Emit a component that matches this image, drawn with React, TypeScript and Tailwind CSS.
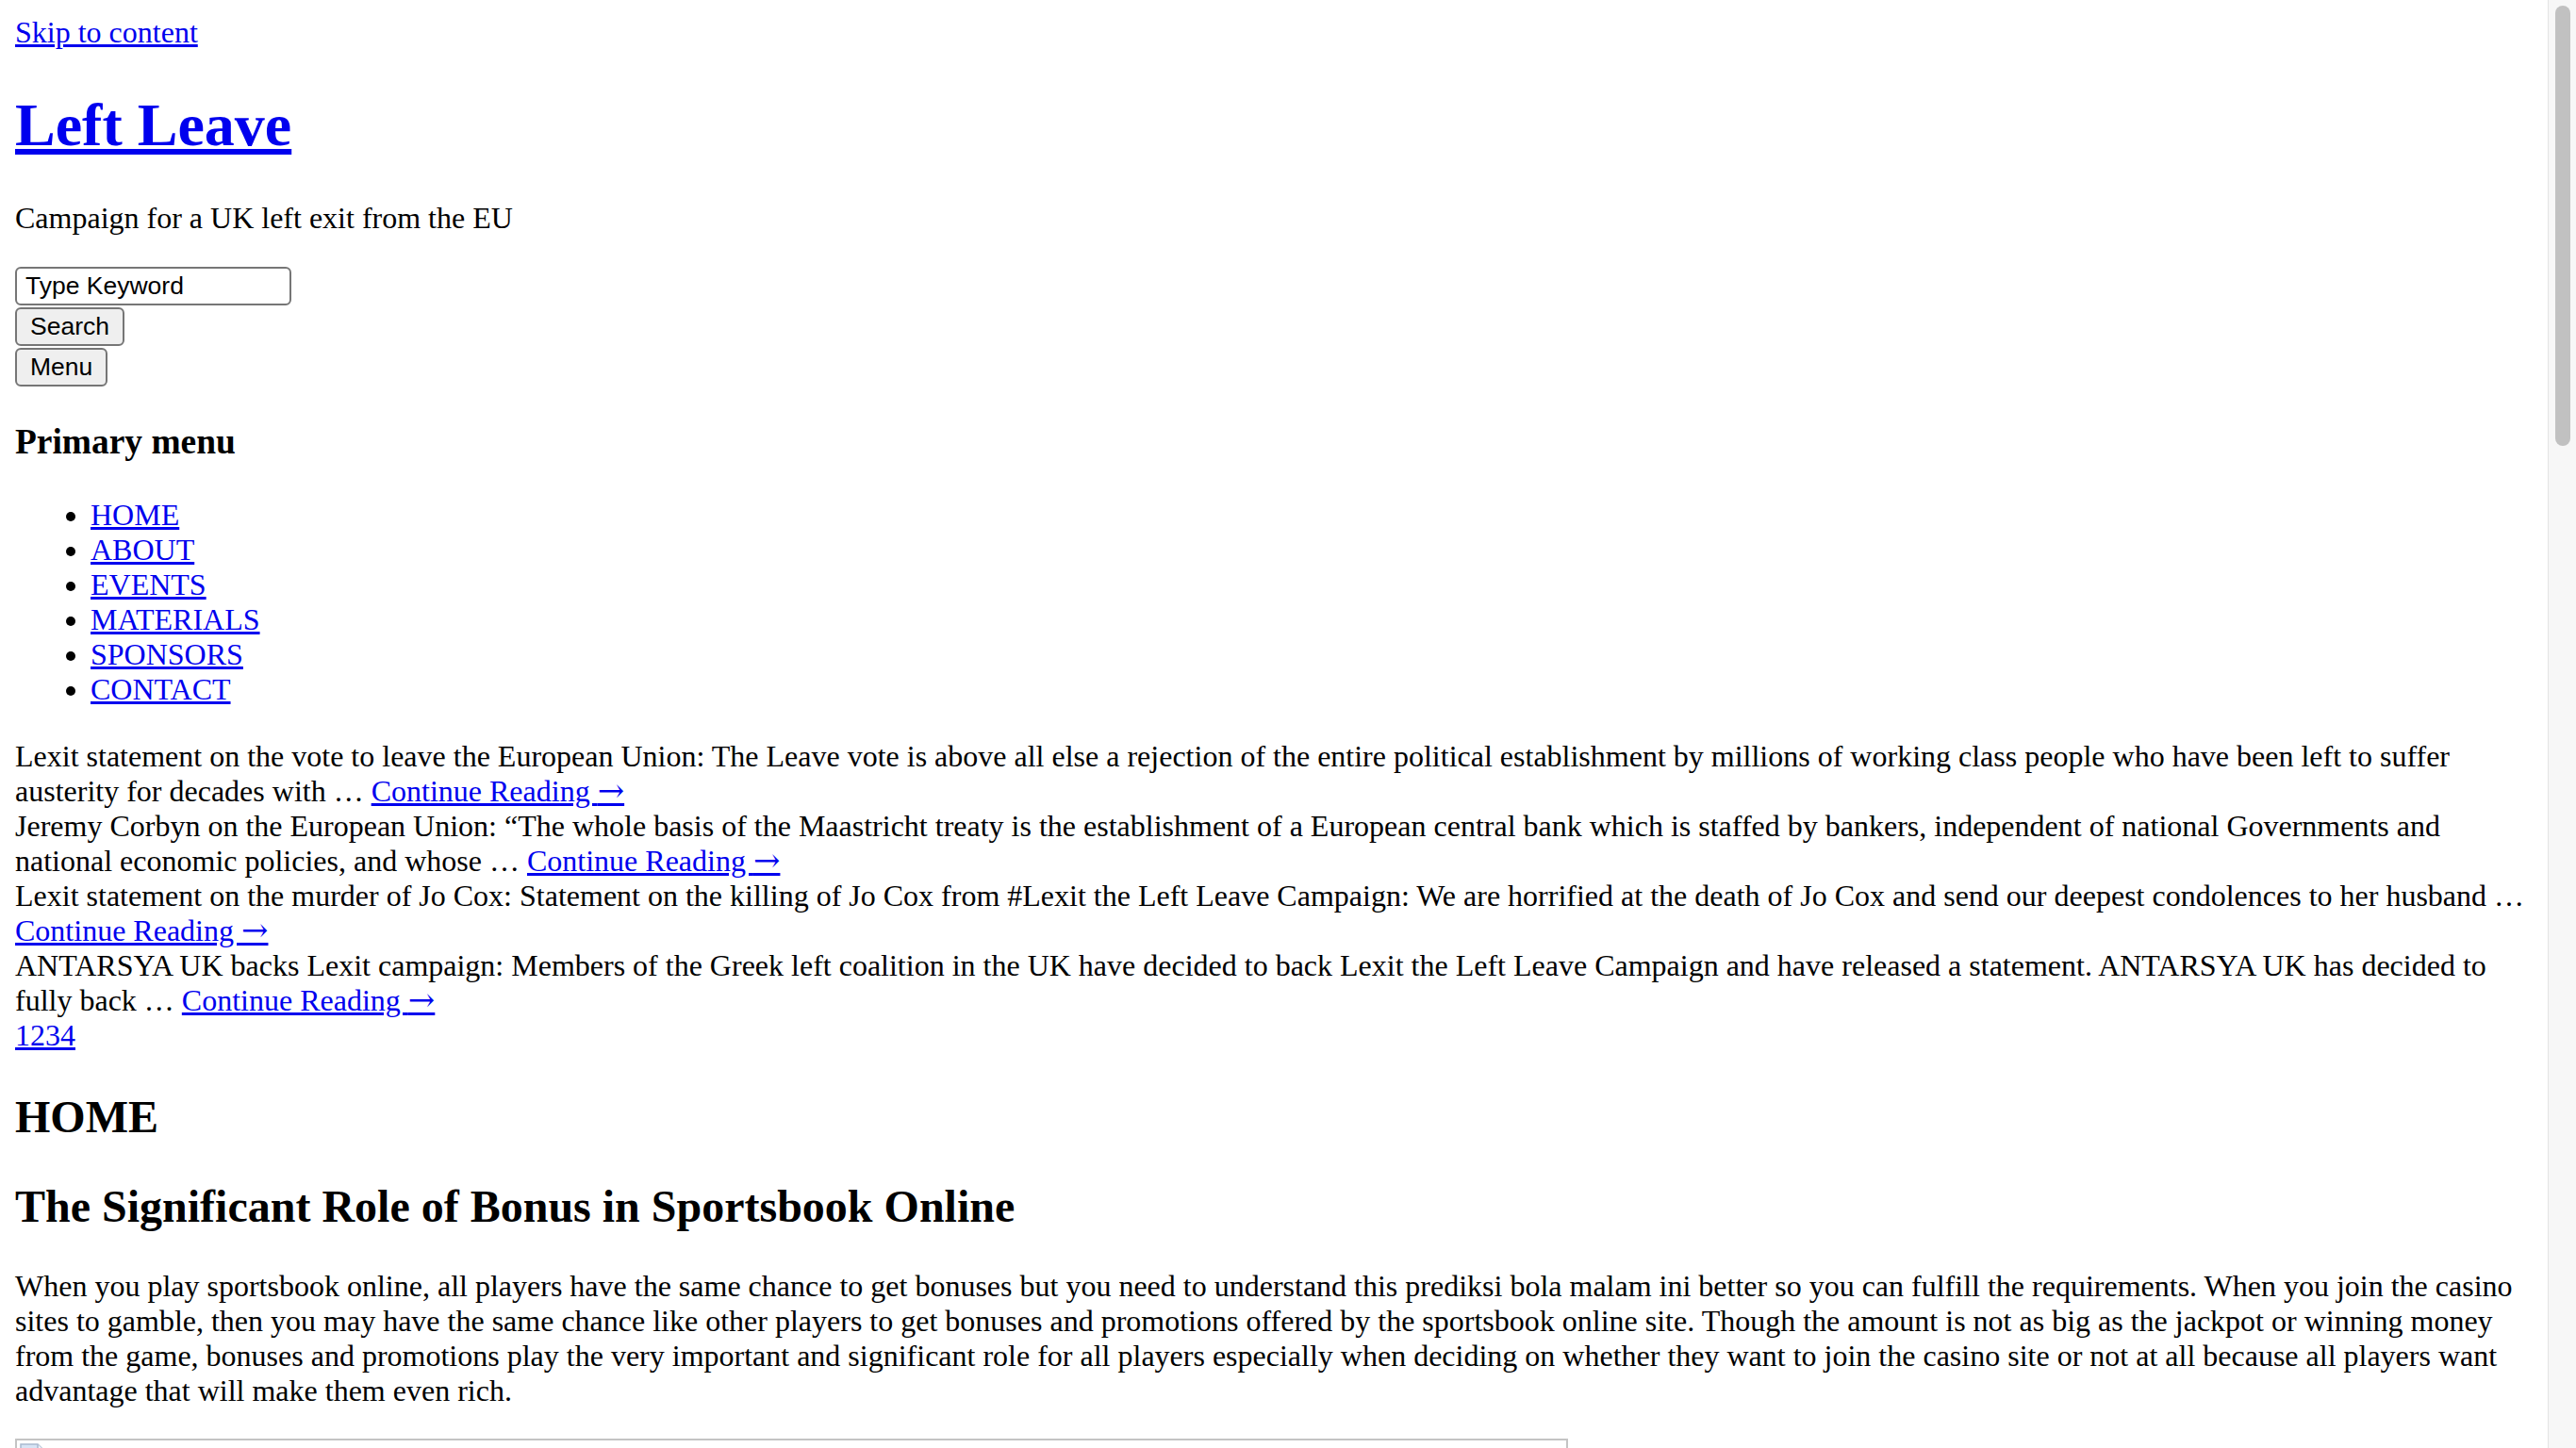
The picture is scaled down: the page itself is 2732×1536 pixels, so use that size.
import React from "react"

const linkCls = "text-[#0000ee] underline"

const posts = [
  {
    text: "Lexit statement on the vote to leave the European Union: The Leave vote is above all else a rejection of the entire political establishment by millions of working class people who have been left to suffer austerity for decades with … ",
  },
  {
    text: "Jeremy Corbyn on the European Union: “The whole basis of the Maastricht treaty is the establishment of a European central bank which is staffed by bankers, independent of national Governments and national economic policies, and whose … ",
  },
  {
    text: "Lexit statement on the murder of Jo Cox: Statement on the killing of Jo Cox from #Lexit the Left Leave Campaign: We are horrified at the death of Jo Cox and send our deepest condolences to her husband … ",
  },
  {
    text: "ANTARSYA UK backs Lexit campaign: Members of the Greek left coalition in the UK have decided to back Lexit the Left Leave Campaign and have released a statement. ANTARSYA UK has decided to fully back … ",
  },
]

const menu = ["HOME", "ABOUT", "EVENTS", "MATERIALS", "SPONSORS", "CONTACT"]

function BrokenImage() {
  return (
    <svg width="32" height="34" viewBox="0 0 32 34" className="block">
      <path d="M2 2 H20 L28 10 V32 H2 Z" fill="#d7e4f5" stroke="#a9b9cf" strokeWidth="1.5" />
      <path d="M20 2 V10 H28" fill="#eef3fa" stroke="#a9b9cf" strokeWidth="1.5" />
      <circle cx="11" cy="14" r="3" fill="#b9cde8" />
    </svg>
  )
}

export default function App() {
  return (
    <div className="flex h-screen overflow-hidden bg-white">
      <div className="flex-1 min-w-0 p-[16px] font-['Liberation_Serif','Times_New_Roman',serif] text-[32px] leading-[normal] text-black">
        <a href="#content" className={linkCls}>
          Skip to content
        </a>

        <h1 className="mt-[43px] mb-[43px] text-[64px] font-bold">
          <a href="#" className={linkCls}>
            Left Leave
          </a>
        </h1>
        <p className="mb-[33px]">Campaign for a UK left exit from the EU</p>

        {/* search + menu toggle */}
        <form className="font-['Liberation_Sans',Arial,sans-serif] text-[26.5px]">
          <input
            type="text"
            defaultValue="Type Keyword"
            className="block h-[41px] w-[293px] border-2 border-[#767676] rounded-[6px] pl-[9px] text-black"
          />
          <button type="button" className="mt-[2px] block h-[41px] border-2 border-[#767676] rounded-[6px] bg-[#efefef] px-[14px]">
            Search
          </button>
          <button type="button" className="mt-[2px] block h-[41px] border-2 border-[#767676] rounded-[6px] bg-[#efefef] px-[14px]">
            Menu
          </button>
        </form>

        <h3 className="mt-[37px] text-[37.44px] font-bold">Primary menu</h3>
        <ul className="mt-[38px] mb-[34px] list-disc pl-[80px]">
          {menu.map((m) => (
            <li key={m}>
              <a href="#" className={linkCls}>
                {m}
              </a>
            </li>
          ))}
        </ul>

        <div>
          {posts.map((p, i) => (
            <div key={i}>
              {p.text}
              <a href="#" className={linkCls}>
                Continue Reading <span className="font-['DejaVu_Serif',serif] text-[34px] leading-[0]">→</span>
              </a>
            </div>
          ))}
          <div>
            <a href="#" className={linkCls}>
              1234
            </a>
          </div>
        </div>

        <h2 id="content" className="mt-[40px] text-[48px] font-bold">
          HOME
        </h2>
        <h2 className="mt-[40px] mb-[39px] text-[48px] font-bold">The Significant Role of Bonus in Sportsbook Online</h2>
        <p className="mb-[32px]">
          When you play sportsbook online, all players have the same chance to get bonuses but you need to understand this prediksi bola malam ini better so you can fulfill the requirements. When you join the casino sites to gamble, then you may have the same chance like other players to get bonuses and promotions offered by the sportsbook online site. Though the amount is not as big as the jackpot or winning money from the game, bonuses and promotions play the very important and significant role for all players especially when deciding on whether they want to join the casino site or not at all because all players want advantage that will make them even rich.
        </p>

        <div className="h-[300px] w-[1647px] border-2 border-[#c4c4c4] pl-[2px] pt-[2px]">
          <BrokenImage />
        </div>
      </div>

      {/* scrollbar */}
      <div className="w-[30px] shrink-0 border-l border-[#e4e4e4] bg-[#f7f7f7] pt-[6px]">
        <div className="ml-[7px] h-[467px] w-[16px] rounded-full bg-[#c1c1c1]" />
      </div>
    </div>
  )
}
